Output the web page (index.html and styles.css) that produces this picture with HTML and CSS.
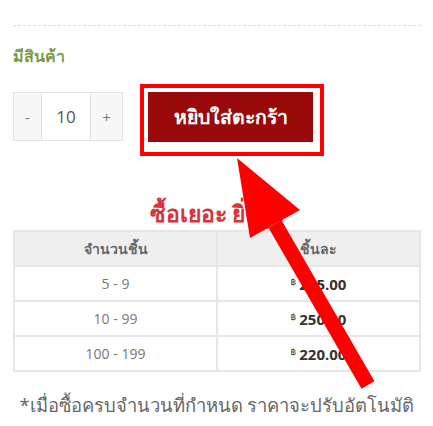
FILE: index.html
```html
<!DOCTYPE html>
<html lang="th">
<head>
<meta charset="utf-8">
<link rel="stylesheet" href="styles.css">
</head>
<body>
<div class="page">
  <div class="rule"></div>
  <p class="stock">มีสินค้า</p>
  <div class="buy-row">
    <div class="qty">
      <span class="qty-btn minus">-</span>
      <span class="qty-val">10</span>
      <span class="qty-btn plus">+</span>
    </div>
    <div class="highlight">
      <button class="add-cart">หยิบใส่ตะกร้า</button>
    </div>
  </div>
  <h3 class="promo">ซื้อเยอะ ยิ่งถูก</h3>
  <table class="tiers">
    <thead>
      <tr><th>จำนวนชิ้น</th><th>ชิ้นละ</th></tr>
    </thead>
    <tbody>
      <tr><td>5 - 9</td><td class="price"><sup>฿</sup>285.00</td></tr>
      <tr><td>10 - 99</td><td class="price"><sup>฿</sup>250.00</td></tr>
      <tr><td>100 - 199</td><td class="price"><sup>฿</sup>220.00</td></tr>
    </tbody>
  </table>
  <p class="note">*เมื่อซื้อครบจำนวนที่กำหนด ราคาจะปรับอัตโนมัติ</p>
  <svg class="arrow" width="433" height="426" viewBox="0 0 433 426">
    <polygon points="237,158 300,210 250,238" fill="#ff0000"/>
    <line x1="275" y1="224" x2="368" y2="385" stroke="#ff0000" stroke-width="15"/>
  </svg>
</div>
</body>
</html>
```

FILE: styles.css
```css
* { box-sizing: border-box; }
html, body { margin: 0; padding: 0; background: #fff; }
body {
  font-family: "Open Sans", "Noto Sans", "DejaVu Sans", sans-serif;
  color: #666;
}
.page {
  position: relative;
  width: 433px;
  height: 426px;
  padding: 25px 12px 0 13px;
  overflow: hidden;
}
.rule {
  border-top: 1px dashed #dcdcdc;
  height: 0;
}
.stock {
  margin: 20px 0 0;
  font-size: 16px;
  font-weight: bold;
  color: #7a9a4a;
  line-height: 20px;
}
.buy-row {
  display: flex;
  align-items: flex-start;
  margin-top: 18px;
}
.qty {
  display: flex;
  margin-top: 8px;
  height: 49px;
  border: 1px solid #e2e2e2;
}
.qty-btn {
  display: flex;
  align-items: center;
  justify-content: center;
  background: #f7f7f7;
  font-size: 15px;
  color: #777;
}
.minus { width: 28px; border-right: 1px solid #e2e2e2; }
.plus { width: 32px; border-left: 1px solid #e2e2e2; }
.qty-val {
  width: 48px;
  display: flex;
  align-items: center;
  justify-content: center;
  font-size: 17px;
  color: #555;
  background: #fff;
}
.highlight {
  margin-left: 17px;
  border: 4px solid #ff0000;
  padding: 4px 7px 10px 4px;
  background: #fff;
}
.add-cart {
  display: block;
  width: 165px;
  height: 50px;
  border: none;
  background: #9b0a0a;
  color: #fff;
  font-family: inherit;
  font-size: 19.5px;
  font-weight: bold;
  padding: 0;
}
.promo {
  margin: 43px 0 0;
  text-align: center;
  font-size: 23px;
  font-weight: 600;
  color: #d6333a;
  line-height: 29px;
}
.tiers {
  width: 408px;
  border-collapse: collapse;
  margin-top: 2px;
  font-size: 14px;
  border: 2px solid #e6e6e6;
}
.tiers th, .tiers td {
  border: 2px solid #e6e6e6;
  text-align: center;
  height: 35px;
  padding: 0;
  width: 50%;
}
.tiers th {
  background: #efefef;
  font-weight: 600;
  color: #666;
  font-size: 14px;
}
.tiers td { color: #777; }
.tiers td.price {
  color: #333;
  font-weight: bold;
  font-size: 15px;
}
.price sup {
  font-size: 9px;
  margin-right: 3px;
  font-weight: normal;
  vertical-align: 5px;
}
.note {
  margin: 20px 0 0;
  font-size: 18.4px;
  line-height: 25px;
  color: #666;
  text-align: center;
}
.arrow {
  position: absolute;
  left: 0;
  top: 0;
  pointer-events: none;
}
```
